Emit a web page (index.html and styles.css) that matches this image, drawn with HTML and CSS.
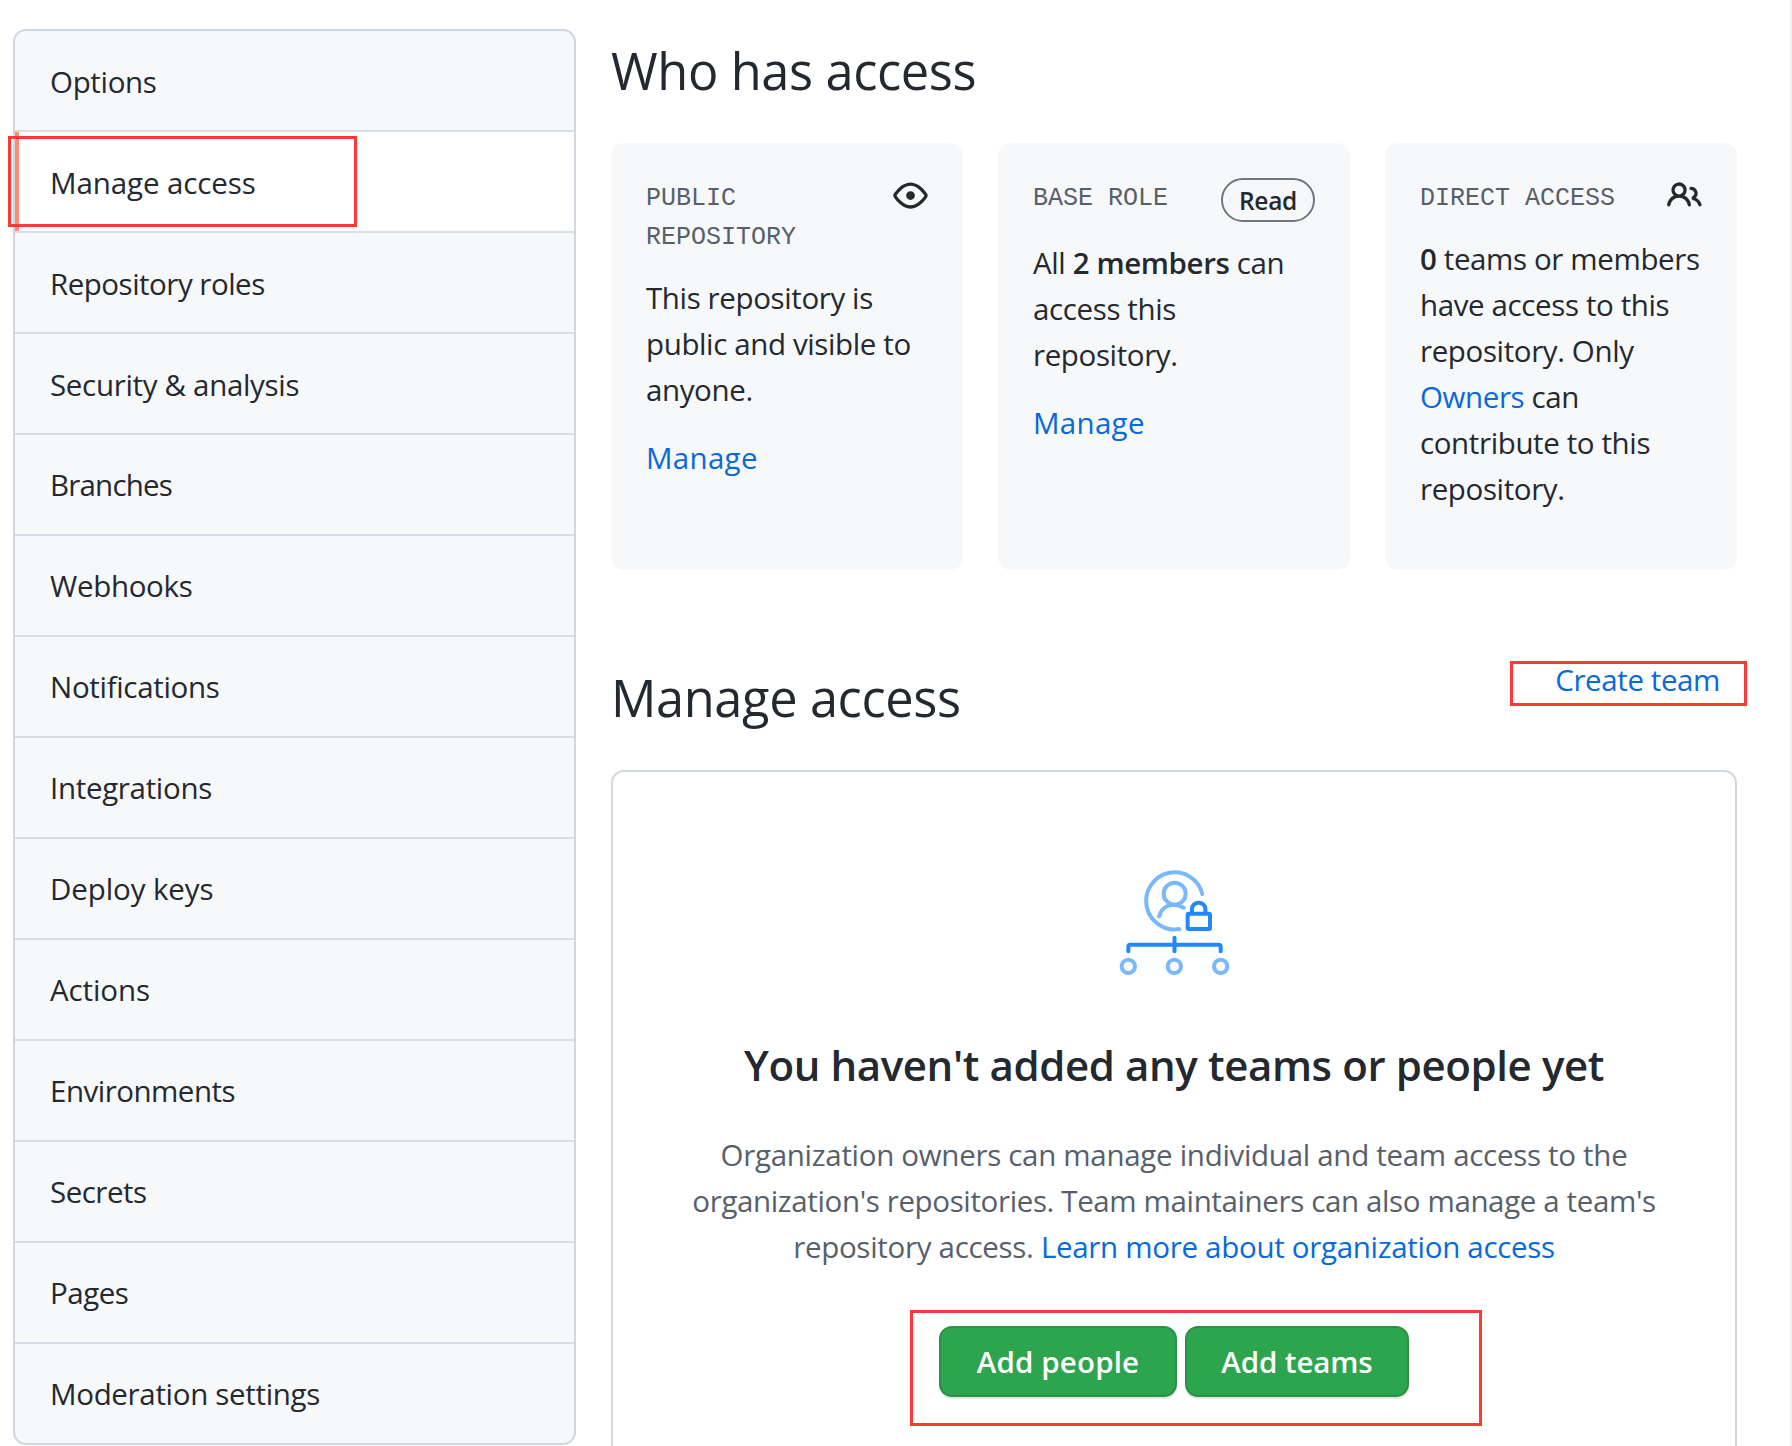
FILE: index.html
```html
<!DOCTYPE html>
<html lang="en">
<head>
<meta charset="utf-8">
<title>Manage access</title>
<link rel="stylesheet" href="styles.css">
</head>
<body>
<div class="page">
  <nav class="menu">
    <a class="menu-item">Options</a>
    <a class="menu-item wide selected">Manage access<i class="mark mark-nav"></i></a>
    <a class="menu-item snug">Repository roles</a>
    <a class="menu-item">Security &amp; analysis</a>
    <a class="menu-item tight">Branches</a>
    <a class="menu-item">Webhooks</a>
    <a class="menu-item">Notifications</a>
    <a class="menu-item">Integrations</a>
    <a class="menu-item wide">Deploy keys</a>
    <a class="menu-item wide">Actions</a>
    <a class="menu-item snug">Environments</a>
    <a class="menu-item snug">Secrets</a>
    <a class="menu-item snug">Pages</a>
    <a class="menu-item">Moderation settings</a>
  </nav>
  <main class="content">
    <h2 class="heading">Who has access</h2>
    <div class="cards">
      <section class="card">
        <div class="card-head">
          <span class="label">Public<br>repository</span>
          <svg class="icon" viewBox="0 0 16 16"><path fill-rule="evenodd" d="M1.679 7.932c.412-.621 1.242-1.75 2.366-2.717C5.175 4.242 6.527 3.5 8 3.5c1.473 0 2.824.742 3.955 1.715 1.124.967 1.954 2.096 2.366 2.717a.119.119 0 010 .136c-.412.621-1.242 1.75-2.366 2.717C10.825 11.758 9.473 12.5 8 12.5c-1.473 0-2.824-.742-3.955-1.715C2.92 9.818 2.09 8.69 1.679 8.068a.119.119 0 010-.136zM8 2c-1.981 0-3.67.992-4.933 2.078C1.797 5.169.88 6.423.43 7.1a1.619 1.619 0 000 1.798c.45.678 1.367 1.932 2.637 3.024C4.329 13.008 6.019 14 8 14c1.981 0 3.67-.992 4.933-2.078 1.27-1.091 2.187-2.345 2.637-3.023a1.619 1.619 0 000-1.798c-.45-.678-1.367-1.932-2.637-3.023C11.671 2.992 9.981 2 8 2zm0 8a2 2 0 100-4 2 2 0 000 4z"/></svg>
        </div>
        <p class="card-text">This repository is<br>public and visible to<br>anyone.</p>
        <a class="link card-link">Manage</a>
      </section>
      <section class="card">
        <div class="card-head">
          <span class="label">Base role</span>
          <span class="badge">Read</span>
        </div>
        <p class="card-text">All <b>2 members</b> can<br>access this<br>repository.</p>
        <a class="link card-link">Manage</a>
      </section>
      <section class="card">
        <div class="card-head">
          <span class="label">Direct access</span>
          <svg class="icon" viewBox="0 0 16 16"><path fill-rule="evenodd" d="M5.5 3.5a2 2 0 100 4 2 2 0 000-4zM2 5.5a3.5 3.5 0 115.898 2.549 5.507 5.507 0 013.034 4.084.75.75 0 11-1.482.235 4.001 4.001 0 00-7.9 0 .75.75 0 01-1.482-.236A5.507 5.507 0 013.102 8.05 3.49 3.49 0 012 5.5zM11 4a.75.75 0 100 1.5 1.5 1.5 0 01.666 2.844.75.75 0 00-.416.672v.352a.75.75 0 00.574.73c1.2.289 2.162 1.2 2.522 2.372a.75.75 0 101.434-.44 5.01 5.01 0 00-2.56-3.012A3 3 0 0011 4z"/></svg>
        </div>
        <p class="card-text"><b>0</b> teams or members<br>have access to this<br>repository. Only<br><a class="link">Owners</a> can<br>contribute to this<br>repository.</p>
      </section>
    </div>
    <div class="section-head">
      <h2 class="heading">Manage access</h2>
      <a class="link create">Create team<i class="mark mark-create"></i></a>
    </div>
    <section class="blank">
      <svg class="art" viewBox="0 0 450 420" fill="none" stroke-linecap="round" stroke-linejoin="round">
        <g class="art-light">
          <path d="M307 132A85.500 85.500 0 1 0 238 237"/>
          <circle cx="224" cy="131" r="33"/>
          <path d="M177 199C188 163 222 156 251 173"/>
          <circle cx="85" cy="349" r="20"/>
          <circle cx="223" cy="349" r="20"/>
          <circle cx="362" cy="349" r="20"/>
        </g>
        <g class="art-dark">
          <rect x="263" y="191" width="67" height="46" rx="3"/>
          <path d="M276 190V176A20 18 0 0 1 316 176V190"/>
          <path d="M85 304V290Q85 284 91 284H356Q362 284 362 290V304M223.500 263V304"/>
        </g>
      </svg>
      <h3 class="blank-title">You haven't added any teams or people yet</h3>
      <p class="blank-text">Organization owners can manage individual and team access to the<br><span class="long-line">organization's repositories. Team maintainers can also manage a team's</span><br>repository access. <a class="link">Learn more about organization access</a></p>
      <div class="actions">
        <button class="btn">Add people</button>
        <button class="btn">Add teams</button>
        <i class="mark mark-actions"></i>
      </div>
    </section>
  </main>
</div>
</body>
</html>
```
FILE: styles.css
```css
* { box-sizing: border-box; }

body {
  margin: 0;
  background: #fff;
  color: #24292f;
  font: 29.5px/46px "Open Sans", "Noto Sans", sans-serif;
  letter-spacing: -.32px;
}

h2, h3, p { margin: 0; }

.page {
  display: grid;
  grid-template: 1417px / 563px 1126px;
  column-gap: 35px;
  height: 1446px;
  padding: 29px 0 0 13px;
  border-right: 2px solid #f0f0f1;
  overflow: hidden;
}

.menu {
  align-self: start;
  border: 2px solid #d0d7de;
  border-radius: 13px;
  background: #f6f8fa;
}

.menu-item {
  display: flex;
  align-items: center;
  position: relative;
  height: 101px;
  padding-left: 35px;
  border-bottom: 2px solid #d8dee4;
}

.menu-item:nth-child(-n+4) { padding-top: 2px; }
.menu-item:last-child { height: 99px; border-bottom: 0; }
.wide { letter-spacing: -.1px; }
.snug { letter-spacing: -.5px; }
.tight { letter-spacing: -.8px; }

.selected { background: #fff; box-shadow: inset 4px 0 #fd8c73; }

.mark {
  position: absolute;
  border: 3px solid #fd3a3a;
  pointer-events: none;
}

.mark-nav { left: -7px; top: 4px; width: 349px; height: 91px; }
.mark-create { right: -27px; top: 4px; width: 237px; height: 45px; }
.mark-actions { left: 297px; top: -16px; width: 572px; height: 116px; }

.content { display: flex; flex-direction: column; padding-top: 2px; }

.heading {
  font-size: 50.5px;
  font-weight: 400;
  line-height: 79px;
  letter-spacing: -.36px;
}

.cards {
  display: grid;
  grid-template-columns: repeat(3, minmax(0, 1fr));
  gap: 35px;
  height: 427px;
  margin: 33px 0 88px;
}

.card {
  padding: 35px;
  border-radius: 13px;
  background: #f6f8fa;
  white-space: nowrap;
}

.card-head { display: flex; justify-content: space-between; align-items: flex-start; }

.label {
  padding-top: 1px;
  color: #57606a;
  font: 25px/39.4px "Liberation Mono", monospace;
  letter-spacing: 0;
  text-transform: uppercase;
}

.icon { width: 35px; height: 35px; fill: #24292f; }

.badge {
  width: 94px;
  height: 44px;
  border: 2px solid #6e7781;
  border-radius: 22px;
  font-size: 24.5px;
  font-weight: 600;
  line-height: 42px;
  text-align: center;
}

.card-text { margin: 17.5px 0 22px; letter-spacing: -.38px; }
.card-text b { font-weight: 600; }
.card-link { display: block; letter-spacing: .3px; }
.link { color: #0969da; }

.section-head { display: flex; justify-content: space-between; align-items: flex-start; }
.create { position: relative; margin: -1px 17px 0 0; letter-spacing: -.4px; }

.blank {
  display: flex;
  flex: 1;
  flex-direction: column;
  align-items: center;
  margin-top: 33px;
  padding-top: 78px;
  border: 2px solid #d0d7de;
  border-bottom: 0;
  border-radius: 13px 13px 0 0;
  text-align: center;
  white-space: nowrap;
}

.art { width: 150px; height: 140px; margin-left: 2px; }
.art-light { stroke: #79b8ff; stroke-width: 12; }
.art-dark { stroke: #2188ff; stroke-width: 12; }

.blank-title {
  margin: 42px 0 34px;
  font-size: 42px;
  font-weight: 600;
  line-height: 66px;
  letter-spacing: -.39px;
}

.blank-text { color: #57606a; letter-spacing: -.3px; }
.long-line { letter-spacing: -.37px; }

.actions {
  display: flex;
  justify-content: center;
  gap: 8px;
  position: relative;
  width: 100%;
  margin-top: 56px;
}

.btn {
  width: 238px;
  height: 71px;
  padding: 0;
  border: 2px solid #2a9147;
  border-radius: 13px;
  background: #2da44e;
  box-shadow: 0 2px 0 rgba(27, 31, 36, .1);
  color: #fff;
  font: inherit;
  font-weight: 600;
  letter-spacing: .15px;
}

.btn + .btn { width: 224px; letter-spacing: -.1px; }
```
